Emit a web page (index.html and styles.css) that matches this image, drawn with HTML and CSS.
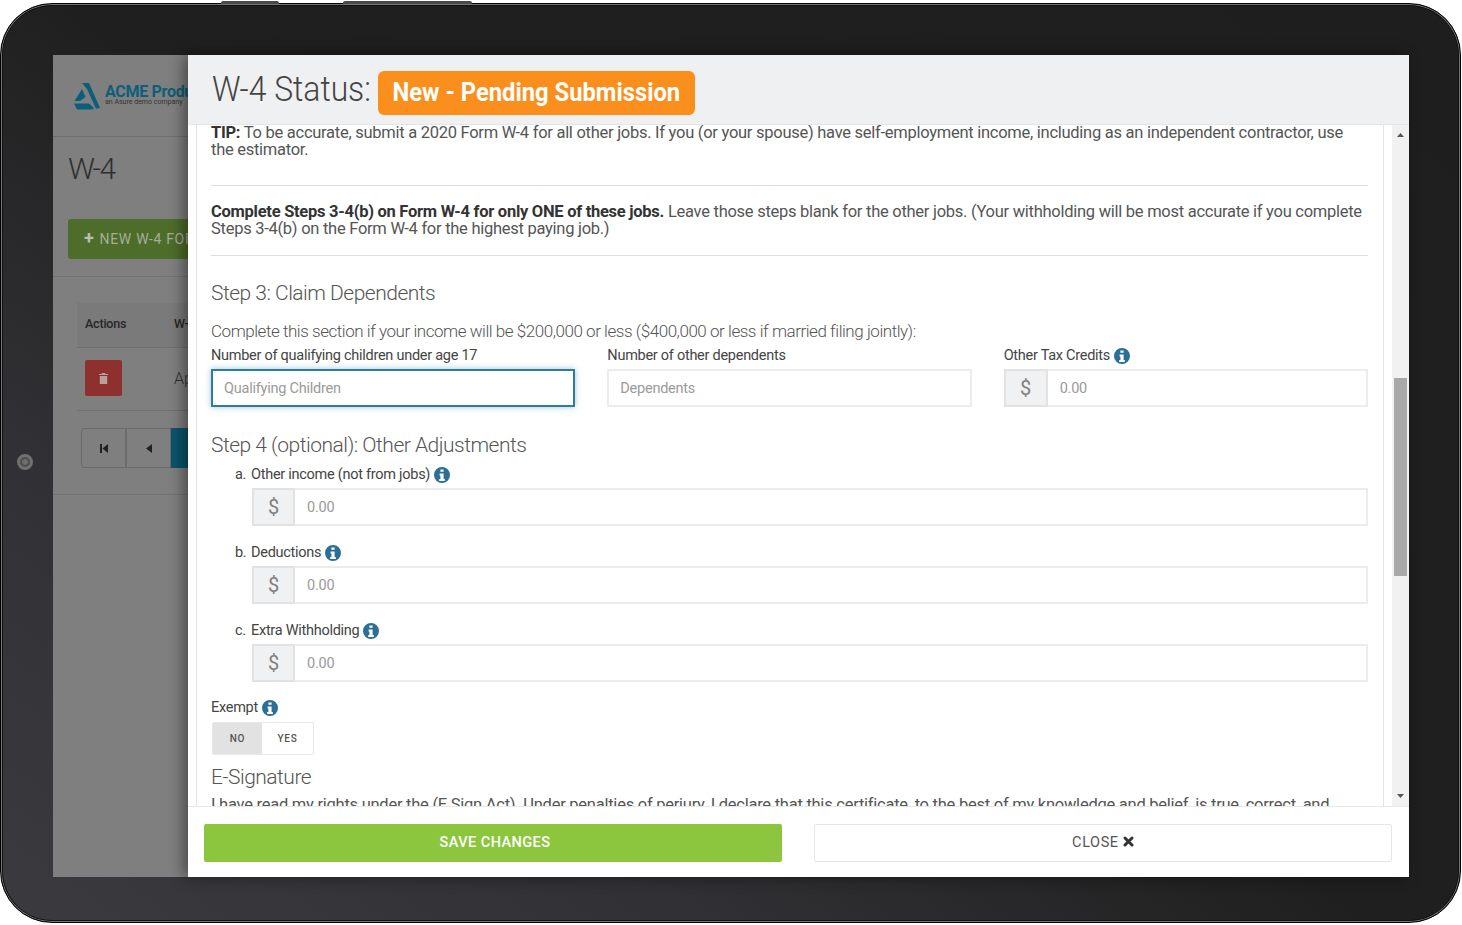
FILE: index.html
```html
<!DOCTYPE html>
<html lang="en">
<head>
<meta charset="utf-8">
<title>W-4 Status</title>
<link rel="stylesheet" href="styles.css">
</head>
<body>
<svg class="defs" width="0" height="0" aria-hidden="true">
  <symbol id="info" viewBox="0 0 24 24">
    <path fill-rule="evenodd" d="M12 0a12 12 0 1 0 0 24a12 12 0 1 0 0-24zM9.6 3.6h4.8v3.6H9.6zM8.4 9.6h6v8.4h1.800v3H7.800v-3h1.800v-5.400H8.400z"/>
  </symbol>
</svg>
<div class="device">
  <span class="hw hw-a"></span>
  <span class="hw hw-b"></span>
  <span class="camera"></span>
  <div class="screen">
    <div class="behind">
      <div class="app-head">
        <svg class="logo-mark" width="27" height="27" viewBox="0 0 27 27"><path d="M8 0h7l11 25l-4 0.800L13 6zM8 6l3.500 8L6 18H0.500zM0 20.500h15l5 4.500l-2 1.500H3z" fill="#0b5f7a"/></svg>
        <div class="logo-text">
          <div class="logo-name">ACME Products</div>
          <div class="logo-sub">an Asure demo company</div>
        </div>
      </div>
      <div class="app-title">W-4</div>
      <div class="new-btn"><span class="new-plus">+</span>NEW W-4 FORM</div>
      <div class="app-rule"></div>
      <div class="app-table">
        <div class="app-th"><span class="th-actions">Actions</span><span>W-4</span></div>
        <div class="app-tr">
          <span class="del-btn">
            <svg width="9" height="11" viewBox="0 0 9 11"><path d="M3 0h3l.5 1H9v1H0V1h2.500zM.8 3h7.400v8H.8z" fill="#b9a09f"/></svg>
          </span>
          <span class="tr-text">Approved</span>
        </div>
      </div>
      <div class="pager">
        <span class="pg"><svg width="8" height="9" viewBox="0 0 8 9"><path d="M0 0h2v9H0zM8 0v9L2.500 4.500z" fill="#222"/></svg></span>
        <span class="pg"><svg width="6" height="9" viewBox="0 0 6 9"><path d="M6 0v9L0 4.500z" fill="#222"/></svg></span>
        <span class="pg pg-on"></span>
      </div>
      <div class="app-rule2"></div>
    </div>
    <div class="modal">
      <header class="m-head">
        <h1 class="m-title">W-4 Status:</h1>
        <span class="badge"><span class="badge-text">New - Pending Submission</span></span>
      </header>
      <div class="m-main">
        <div class="m-content">
          <p class="para p-tip"><b>TIP:</b> To be accurate, submit a 2020 Form W-4 for all other jobs. If you (or your spouse) have self-employment income, including as an independent contractor, use the estimator.</p>
          <hr class="rule rule-a">
          <p class="para p-two"><b>Complete Steps 3-4(b) on Form W-4 for only ONE of these jobs.</b> Leave those steps blank for the other jobs. (Your withholding will be most accurate if you complete Steps 3-4(b) on the Form W-4 for the highest paying job.)</p>
          <hr class="rule rule-b">
          <h2 class="step step-3">Step 3: Claim Dependents</h2>
          <p class="lead">Complete this section if your income will be $200,000 or less ($400,000 or less if married filing jointly):</p>
          <div class="three">
            <div>
              <div class="lbl">Number of qualifying children under age 17</div>
              <input class="field focus" placeholder="Qualifying Children">
            </div>
            <div>
              <div class="lbl">Number of other dependents</div>
              <input class="field" placeholder="Dependents">
            </div>
            <div>
              <div class="lbl">Other Tax Credits <svg class="i"><use href="#info"/></svg></div>
              <div class="money"><span class="cur">$</span><input class="amt" placeholder="0.00"></div>
            </div>
          </div>
          <h2 class="step step-4">Step 4 (optional): Other Adjustments</h2>
          <div class="adj">
            <div class="lbl lbl-sub"><span class="ltr">a.</span> Other income (not from jobs) <svg class="i"><use href="#info"/></svg></div>
            <div class="money"><span class="cur">$</span><input class="amt" placeholder="0.00"></div>
          </div>
          <div class="adj">
            <div class="lbl lbl-sub"><span class="ltr">b.</span> Deductions <svg class="i"><use href="#info"/></svg></div>
            <div class="money"><span class="cur">$</span><input class="amt" placeholder="0.00"></div>
          </div>
          <div class="adj">
            <div class="lbl lbl-sub"><span class="ltr">c.</span> Extra Withholding <svg class="i"><use href="#info"/></svg></div>
            <div class="money"><span class="cur">$</span><input class="amt" placeholder="0.00"></div>
          </div>
          <div class="lbl lbl-ex">Exempt <svg class="i"><use href="#info"/></svg></div>
          <div class="toggle"><span class="opt opt-on">NO</span><span class="opt">YES</span></div>
          <h2 class="step step-e">E-Signature</h2>
          <p class="para p-sign">I have read my rights under the (E Sign Act). Under penalties of perjury, I declare that this certificate, to the best of my knowledge and belief, is true, correct, and complete.</p>
        </div>
        <div class="sbar">
          <svg class="arrow" width="7" height="4" viewBox="0 0 7 4"><path d="M3.500 0L7 4H0z" fill="#555"/></svg>
          <div class="track"><div class="thumb"></div></div>
          <svg class="arrow" width="7" height="4" viewBox="0 0 7 4"><path d="M0 0h7L3.500 4z" fill="#555"/></svg>
        </div>
      </div>
      <footer class="m-foot">
        <button class="btn btn-save">SAVE CHANGES</button>
        <button class="btn btn-close">CLOSE <svg width="11" height="11" viewBox="0 0 11 11"><path d="M2 2l7 7M9 2l-7 7" stroke="#333" stroke-width="3" stroke-linecap="round"/></svg></button>
      </footer>
    </div>
  </div>
</div>
</body>
</html>
```

FILE: styles.css
```css
* { box-sizing: border-box; }
html, body { margin: 0; height: 925px; overflow: hidden; background: #fff; }
body { font-family: Roboto, "Liberation Sans", sans-serif; color: #555; }
.defs { position: absolute; }

.device {
  position: relative;
  width: 1461px;
  height: 920px;
  margin-top: 3px;
  padding: 51px 51px 45px 52px;
  border-radius: 52px;
  border: 1px solid #000;
  background: linear-gradient(35deg, #3b3b3f 0%, #313135 25%, #1f1f1f 50%, #1e1e1e 100%);
  box-shadow: inset 0 0 0 1px #777, inset 0 0 0 2px #111;
  display: flex;
}
.hw { position: absolute; top: -3px; height: 3px; background: #4a4a4a; border-radius: 2px 2px 0 0; }
.hw-a { left: 220px; width: 58px; }
.hw-b { left: 342px; width: 129px; }
.camera {
  position: absolute; left: 16px; top: 450px; width: 16px; height: 16px;
  border-radius: 50%; background: radial-gradient(circle, #6e6e6e 0 35%, #4f4f4f 45% 100%); border: 3px solid #707070;
}

.screen { flex: 1; display: flex; min-width: 0; }

.behind { width: 135px; flex: none; overflow: hidden; background: #7f7f7f; color: #2f2f2f; white-space: nowrap; }
.app-head { height: 82px; display: flex; align-items: center; gap: 4px; padding: 0 0 0 21px; border-bottom: 1px solid #6f6f6f; }
.logo-mark { flex: none; margin-top: 2px; }
.logo-text { margin-top: -1px; }
.logo-name { font-weight: 700; font-size: 16px; line-height: 15px; color: #0b5f7a; letter-spacing: -.3px; }
.logo-sub { font-size: 7px; line-height: 7px; color: #333; }
.app-title { font-weight: 300; font-size: 30px; line-height: 36px; margin: 14px 0 0 15px; letter-spacing: -1.5px; }
.new-btn { margin: 32px 0 0 15px; width: 135px; height: 40px; line-height: 38px; background: #4e6c2a; color: #a4ae9a; font-size: 14px; letter-spacing: .7px; padding-left: 16px; border-radius: 3px 0 0 3px; }
.new-plus { font-weight: 700; font-size: 18px; margin-right: 5px; color: #b9bdb5; }
.app-rule { margin-top: 17px; border-top: 1px solid #737373; }
.app-table { margin: 26px 0 0 24px; }
.app-th { height: 45px; display: flex; align-items: center; background: #7a7a7a; border-bottom: 1px solid #707070; font-size: 12.500px; letter-spacing: -.2px; font-weight: 500; padding: 0 0 3px 8px; color: #262626; }
.th-actions { width: 89px; flex: none; }
.app-tr { height: 63px; display: flex; align-items: center; border-bottom: 1px solid #707070; padding: 0 0 2px 8px; }
.del-btn { width: 37px; height: 36px; flex: none; background: #8e302e; border-radius: 2px; display: flex; align-items: center; justify-content: center; }
.tr-text { margin-left: 52px; font-size: 16px; font-weight: 300; }
.pager { display: flex; margin: 17px 0 0 28px; height: 40px; }
.pg { width: 45px; flex: none; border: 1px solid #6c6c6c; display: flex; align-items: center; justify-content: center; }
.pg:first-child { border-radius: 3px 0 0 3px; }
.pg-on { background: #0a546d; border-color: #0a546d; }
.app-rule2 { margin-top: 26px; border-top: 1px solid #737373; }

.modal { flex: 1; min-width: 0; display: flex; flex-direction: column; background: #fff; box-shadow: -4px 0 14px rgba(0,0,0,.45); position: relative; }
.m-head { height: 70px; flex: none; background: #eff0f2; border-bottom: 1px solid #e4e5e6; display: flex; align-items: center; padding: 0 0 0 24px; gap: 8px; }
.m-title { margin: 0; width: 158px; flex: none; white-space: nowrap; font-weight: 300; font-size: 35px; line-height: 40px; color: #444; transform: scaleX(.91); transform-origin: 0 50%; }
.badge { width: 317px; height: 44px; flex: none; margin-top: 6px; background: #fb8f1e; color: #fff; border-radius: 6px; display: flex; justify-content: center; white-space: nowrap; }
.badge-text { flex: none; font-size: 25.500px; font-weight: 700; line-height: 42px; transform: scaleX(.932); }

.m-main { flex: 1; min-height: 0; display: flex; overflow: hidden; padding-left: 8px; }
.m-content { flex: 1; min-width: 0; overflow: hidden; border-left: 1px solid #e3e3e3; border-right: 1px solid #e3e3e3; padding: 0 15px 0 14px; }
.sbar { width: 17px; flex: none; margin-left: 8px; background: #f1f1f1; display: flex; flex-direction: column; align-items: center; padding: 8px 0; }
.arrow { flex: none; }
.track { flex: 1; width: 100%; padding: 0 2px; }
.thumb { margin-top: 241px; height: 198px; background: #a8a8a8; }

.para { margin: 0; font-size: 16.500px; line-height: 17px; letter-spacing: -.27px; color: #555; }
.para b { font-weight: 700; color: #333; }
.p-tip { margin-top: -1px; }
.rule { border: 0; border-top: 1px solid #ddd; margin: 0; }
.rule-a { margin-top: 27px; }
.p-two { margin-top: 17px; }
.rule-b { margin-top: 18px; }
.step { margin: 0; font-weight: 300; font-size: 21px; line-height: 26px; letter-spacing: -.5px; color: #555; }
.step-3 { margin-top: 24px; }
.lead { margin: 15px 0 0; font-weight: 300; font-size: 17px; line-height: 20px; letter-spacing: -.46px; color: #555; }
.three { display: grid; grid-template-columns: repeat(3, 1fr); gap: 32px; margin-top: 5px; }
.lbl { font-size: 14.500px; line-height: 20px; color: #444; letter-spacing: -.27px; height: 20px; display: flex; align-items: center; gap: 4px; white-space: nowrap; }
.i { width: 16px; height: 16px; fill: #2b6f96; flex: none; }
.field, .amt { font-family: inherit; font-size: 14.500px; letter-spacing: -.24px; color: #555; outline: 0; border: 0; background: #fff; }
.field { display: block; width: 100%; height: 38px; margin-top: 3px; border: 2px solid #ececec; padding: 0 11px; }
.focus { border-color: #2e7d9c; box-shadow: 0 0 6px rgba(46,125,156,.45); }
.field::placeholder, .amt::placeholder { color: #9a9a9a; opacity: 1; }
.money { display: flex; height: 38px; margin-top: 3px; border: 2px solid #ececec; }
.cur { width: 44px; flex: none; margin: -2px 0 -2px -2px; background: #f0f1f2; border: 2px solid #e2e2e2; display: flex; align-items: center; justify-content: center; font-size: 20px; color: #808080; }
.amt { flex: 1; min-width: 0; padding: 0 12px; }
.step-4 { margin-top: 25px; }
.adj { padding-left: 41px; margin-top: 7px; }
.adj + .adj { margin-top: 17px; }
.adj .cur { width: 43px; }
.lbl-sub { position: relative; margin-left: -1px; }
.ltr { position: absolute; left: -16px; }
.lbl-ex { margin-top: 16px; }
.toggle { display: inline-flex; height: 33px; margin: 4px 0 0 1px; border: 1px solid #e8e8e8; border-radius: 2px; vertical-align: top; }
.opt { width: 51px; display: flex; align-items: center; justify-content: center; font-size: 10px; font-weight: 500; letter-spacing: .8px; color: #555; }
.opt-on { width: 49px; background: #e2e2e2; }
.step-e { margin-top: 9px; }
.p-sign { margin-top: 6px; letter-spacing: -.25px; }

.m-foot { height: 71px; flex: none; border-top: 1px solid #e8e8e8; display: grid; grid-template-columns: 1fr 1fr; gap: 32px; padding: 17px 17px 15px 16px; background: #fff; }
.btn { font-family: inherit; font-size: 14.500px; border-radius: 2px; height: 38px; padding: 0 0 2px; }
.btn-save { background: #8cc63f; color: #fff; border: 0; font-weight: 500; letter-spacing: .45px; padding-left: 4px; }
.btn-close { background: #fff; color: #555; border: 1px solid #e6e6e6; letter-spacing: .6px; }
```
